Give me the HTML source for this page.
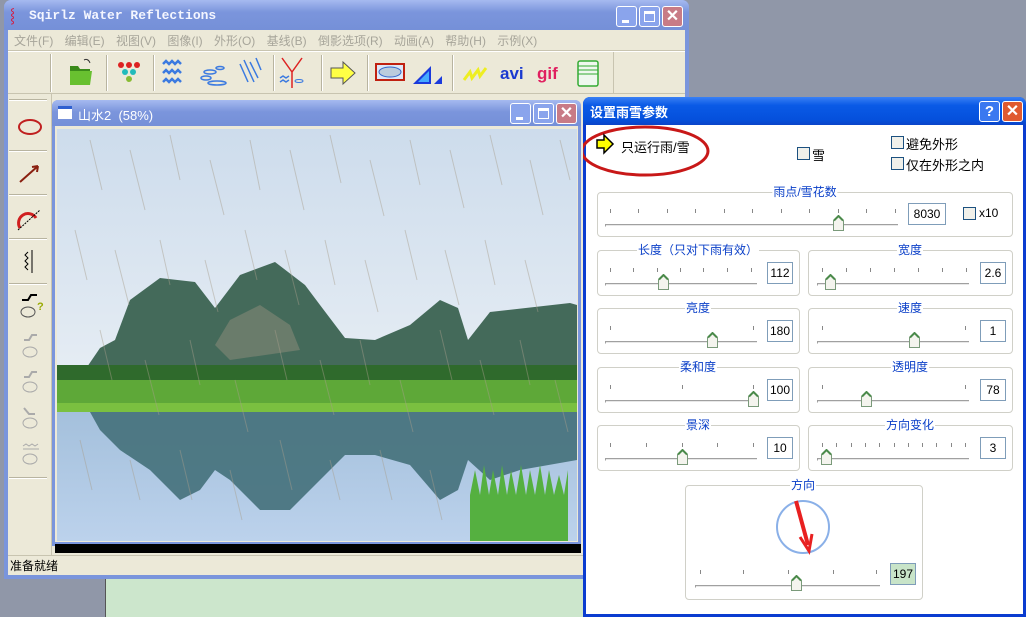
<!DOCTYPE html>
<html><head><meta charset="utf-8"><style>
*{margin:0;padding:0;box-sizing:border-box}
body{width:1026px;height:617px;overflow:hidden;background:#9097a8;position:relative;font-family:"Liberation Sans","Noto Sans CJK SC",sans-serif;font-size:12px}
.a{position:absolute}
.gb{position:absolute;border:1px solid #d0d0c8;border-radius:4px}
.gl{position:absolute;color:#0a3fc8;background:#fff;padding:0 1px;font-size:12px;line-height:14px;white-space:nowrap;transform:translateX(-50%)}
.tk{position:absolute;width:1px;height:4px;background:#888}
.tr{position:absolute;height:3px;border-top:1px solid #a0a0a0;border-bottom:1px solid #fff;background:#e8e8e8;border-left:1px solid #a0a0a0}
.th{position:absolute;width:11px;height:16px}
.bx{position:absolute;border:1px solid #7f9db9;background:#fff;text-align:center;font-size:12px;line-height:20px;height:22px}
.cb{position:absolute;width:13px;height:13px;border:1px solid #1c5180;background:#f0f0ea}
.tbsep{position:absolute;top:55px;width:2px;height:36px;border-left:1px solid #b8b4a0;border-right:1px solid #fff}
.lsep{position:absolute;left:12px;width:38px;height:2px;border-top:1px solid #b8b4a0;border-bottom:1px solid #fff}
.btn{position:absolute;width:21px;height:21px;border:1px solid #fff;border-radius:3px}
</style></head><body>
<div class="a" style="left:105px;top:578px;width:480px;height:39px;background:#cce6cc;border-left:1px solid #555"></div>

<div class="a" style="left:4px;top:0;width:685px;height:579px;background:#7a95dc;border-radius:7px 7px 0 0"></div>
<div class="a" style="left:4px;top:0;width:685px;height:30px;background:linear-gradient(#a6baf0,#7b95dc 40%,#7590d8);border-radius:7px 7px 0 0"></div>
<div class="a" style="left:10px;top:6px;font-size:14px;color:#d13">⸾</div>
<div class="a" style="left:29px;top:8px;color:#f4f6ff;font-family:'Liberation Mono',monospace;font-size:13px;font-weight:bold">Sqirlz Water Reflections</div>
<div class="btn" style="left:616px;top:6px;background:#8aa4ec"><div class="a" style="left:5px;top:13px;width:7px;height:3px;background:#fff"></div></div>
<div class="btn" style="left:639px;top:6px;background:#8aa4ec"><div class="a" style="left:4px;top:4px;width:11px;height:11px;border:1px solid #fff;border-top-width:3px"></div></div>
<div class="btn" style="left:662px;top:6px;background:#c87b86;color:#fff;font-weight:bold;font-size:16px;text-align:center;line-height:19px">✕</div>
<div class="a" style="left:8px;top:30px;width:677px;height:545px;background:#ece9d8"></div>
<div class="a" style="left:14px;top:32px;color:#a7a59a;font-size:12px;word-spacing:8px;white-space:nowrap">文件(F) 编辑(E) 视图(V) 图像(I) 外形(O) 基线(B) 倒影选项(R) 动画(A) 帮助(H) 示例(X)</div>
<div class="a" style="left:8px;top:50px;width:677px;height:1px;background:#c8c4b0"></div>
<div class="a" style="left:8px;top:51px;width:677px;height:1px;background:#fff"></div>
<div class="a" style="left:8px;top:93px;width:677px;height:1px;background:#c8c4b0"></div>
<div class="a" style="left:50px;top:54px;width:2px;height:38px;border-left:1px solid #b8b4a0;border-right:1px solid #fff"></div>
<div class="a" style="left:613px;top:52px;width:1px;height:41px;background:#c8c4b0"></div>
<div class="tbsep" style="left:106px"></div><div class="tbsep" style="left:153px"></div><div class="tbsep" style="left:273px"></div><div class="tbsep" style="left:321px"></div><div class="tbsep" style="left:367px"></div><div class="tbsep" style="left:452px"></div>
<svg class="a" style="left:60px;top:54px" width="560" height="38">
 <path d="M10 12h8l2 3h10v16H10z" fill="#3a8a1a"/><path d="M10 17h22l-2 14H10z" fill="#68c030"/><path d="M24 6q4-2 6 3" stroke="#333" fill="none"/>
 <g><circle cx="61" cy="11" r="3" fill="#d22"/><circle cx="69" cy="11" r="3" fill="#d22"/><circle cx="77" cy="11" r="3" fill="#d22"/><circle cx="65" cy="18" r="3" fill="#2bb"/><circle cx="73" cy="18" r="3" fill="#2bb"/><circle cx="69" cy="25" r="3" fill="#8b3"/></g>
 <g stroke="#3b7ae0" stroke-width="2.5" fill="none"><path d="M103 10l3-3 3 3 3-3 3 3 3-3 3 3"/><path d="M103 19l3-3 3 3 3-3 3 3 3-3 3 3"/><path d="M103 28l3-3 3 3 3-3 3 3 3-3 3 3"/></g>
 <g stroke="#3b7ae0" stroke-width="1.5" fill="none"><ellipse cx="150" cy="18" rx="6" ry="2"/><ellipse cx="146" cy="24" rx="5" ry="2"/><ellipse cx="157" cy="29" rx="9" ry="2"/><ellipse cx="160" cy="14" rx="4" ry="1.5"/></g>
 <g stroke="#3b7ae0" stroke-width="1.5"><path d="M180 10l8 18M184 6l10 22M190 8l8 16M196 4l5 12"/></g>
 <path d="M222 4l10 14 10-14M232 18v16" stroke="#d22" stroke-width="1.5" fill="none"/><path d="M220 24l3-2 3 2 3-2M220 28l3-2 3 2 3-2" stroke="#3b7ae0" fill="none" stroke-width="1.5"/><ellipse cx="239" cy="27" rx="4" ry="1.5" stroke="#3b7ae0" fill="none"/>
 <path d="M271 14h12v-6l12 11-12 11v-6h-12z" fill="#ff4" stroke="#555"/>
 <rect x="316" y="10" width="28" height="16" fill="#dde8f8" stroke="#c02010" stroke-width="2"/><ellipse cx="330" cy="18" rx="11" ry="5" fill="#bcd" stroke="#36c"/>
 <path d="M353 30l18-18v18z" fill="#1a3adc"/><path d="M358 28l11-11v11z" fill="#4af"/><path d="M374 30l8-8v8z" fill="#1a3adc"/>
 <path d="M404 26l6-8 2 6 6-8 2 6 6-8" stroke="#ee2" stroke-width="3" fill="none"/>
 <text x="440" y="25" font-family="Liberation Sans" font-weight="bold" font-size="17" fill="#1a3ad0">avi</text>
 <text x="477" y="25" font-family="Liberation Sans" font-weight="bold" font-size="17" fill="#e02060">gif</text>
 <rect x="518" y="7" width="20" height="25" rx="2" fill="#eef8ee" stroke="#3a3" stroke-width="1.5"/><path d="M518 12h20M518 16h20M518 20h20" stroke="#3a3"/>
</svg>
<div class="a" style="left:8px;top:94px;width:44px;height:461px;background:#ece9d8;border-right:1px solid #c8c4b0"></div>
<div class="lsep" style="top:99px;left:9px"></div><div class="lsep" style="top:150px;left:9px"></div><div class="lsep" style="top:194px;left:9px"></div><div class="lsep" style="top:238px;left:9px"></div><div class="lsep" style="top:283px;left:9px"></div><div class="lsep" style="top:477px;left:9px"></div>
<svg class="a" style="left:8px;top:100px" width="44" height="380">
 <ellipse cx="22" cy="27" rx="11" ry="7" stroke="#c02020" stroke-width="2" fill="none"/>
 <path d="M12 82l18-16M30 66l-6 1M30 66l-1 6" stroke="#8a2010" stroke-width="2" fill="none"/>
 <path d="M12 128A9 9 0 0 1 28 118" stroke="#d02020" stroke-width="3" fill="none"/><path d="M10 130l22-20" stroke="#000" stroke-dasharray="2 1"/>
 <path d="M24 150v23M20 152l-3 3 3 3-3 3 3 3-3 3 3 3" stroke="#000" fill="none"/>
 <path d="M14 200h6l3-5h6" stroke="#000" stroke-width="2" fill="none"/><ellipse cx="20" cy="212" rx="7" ry="5" stroke="#555" fill="none"/><text x="29" y="210" font-size="11" font-weight="bold" fill="#9a0">?</text>
 <g stroke="#aaa" fill="none"><path d="M16 240h5l3-5h5" stroke-width="2"/><ellipse cx="22" cy="252" rx="7" ry="5"/>
 <path d="M16 277h5l3-5h5" stroke-width="2"/><ellipse cx="22" cy="287" rx="7" ry="5"/>
 <path d="M16 308l5 6h6" stroke-width="2"/><ellipse cx="22" cy="323" rx="7" ry="5"/>
 <path d="M15 346l3-2 3 2 3-2 3 2 3-2M15 349h16"/><ellipse cx="22" cy="359" rx="7" ry="5"/></g>
</svg>
<div class="a" style="left:52px;top:100px;width:529px;height:446px;background:#7a95dc;border-radius:6px 6px 0 0"></div>
<div class="a" style="left:52px;top:100px;width:529px;height:26px;background:linear-gradient(#a6baf0,#7b95dc 45%,#7590d8);border-radius:6px 6px 0 0"></div>
<div class="a" style="left:58px;top:106px;width:14px;height:13px;background:#fff;border-top:3px solid #3060d0"></div>
<div class="a" style="left:78px;top:105px;color:#fff;font-size:13px">山水2&nbsp;&nbsp;(58%)</div>
<div class="btn" style="left:510px;top:103px;background:#8aa4ec"><div class="a" style="left:5px;top:13px;width:7px;height:3px;background:#fff"></div></div>
<div class="btn" style="left:533px;top:103px;background:#8aa4ec"><div class="a" style="left:4px;top:4px;width:11px;height:11px;border:1px solid #fff;border-top-width:3px"></div></div>
<div class="btn" style="left:556px;top:103px;background:#c87b86;color:#fff;font-weight:bold;font-size:16px;text-align:center;line-height:19px">✕</div>
<div class="a" style="left:55px;top:126px;width:523px;height:416px;background:#ece9d8"></div>
<svg class="a" style="left:57px;top:129px" width="520" height="412" viewBox="57 129 520 412">
 <defs><linearGradient id="sk" x1="0" y1="0" x2="0" y2="1"><stop offset="0" stop-color="#cddcec"/><stop offset="1" stop-color="#e6edf4"/></linearGradient>
 <linearGradient id="wt" x1="0" y1="0" x2="0" y2="1"><stop offset="0" stop-color="#a4c0dc"/><stop offset="1" stop-color="#bcd2ec"/></linearGradient></defs>
 <rect x="57" y="129" width="520" height="250" fill="url(#sk)"/>
 <path d="M85 370L100 348 115 340 130 300 160 278 195 282 215 308 240 275 275 262 305 285 320 305 345 338 375 340 410 325 440 300 458 308 468 340 490 312 570 303 577 305V378H85z" fill="#446a5a"/>
 <path d="M215 345L230 320 260 305 290 325 300 350 230 360z" fill="#8a8a7a" opacity=".55"/>
 <rect x="57" y="365" width="520" height="22" fill="#2f6a2c"/>
 <rect x="57" y="380" width="520" height="32" fill="#5ea838"/>
 <rect x="57" y="403" width="520" height="10" fill="#7ac040"/>
 <rect x="57" y="412" width="520" height="129" fill="url(#wt)"/>
 <path d="M90 412L100 430 120 450 150 470 180 500 200 490 215 470 230 480 260 510 290 510 320 480 345 455 375 455 410 465 440 500 458 490 468 460 490 480 520 470 577 460V412z" fill="#44707a" opacity=".9"/>
 <path d="M470 495l5-25 5 25 4-30 5 30 4-25 5 25 4-30 5 30 4-25 5 25 5-30 5 30 4-25 5 25 5-30 5 30 4-25 5 25 5-20 5 20 4-25V541H470z" fill="#55b040"/>
 <g stroke="#a89e8c" stroke-width="1" opacity=".45">
  <path d="M90 140l12 50M130 150l15 60M170 135l10 45M210 160l14 55M250 140l10 50M290 150l14 60M330 135l11 48M370 160l14 56M410 140l10 45M450 150l14 58M490 135l12 50M530 160l13 55M560 140l10 40"/>
  <path d="M75 230l12 50M115 250l14 55M160 240l10 45M205 260l13 52M245 230l12 50M285 250l14 55M325 240l10 45M365 260l13 52M405 230l12 50M445 250l14 55M485 240l10 45M525 260l13 52"/>
  <path d="M100 330l12 50M145 360l14 55M190 340l10 45M235 380l13 52M275 330l12 50M320 360l14 55M360 340l10 45M400 380l13 52M440 330l12 50M480 360l14 55M520 340l10 45M555 380l13 52"/>
  <path d="M80 440l12 50M130 460l10 40M180 450l12 50M230 470l12 50M280 440l12 50M330 460l10 40M380 450l12 50M430 470l12 50"/>
 </g>
</svg>
<div class="a" style="left:55px;top:544px;width:526px;height:9px;background:#000"></div>
<div class="a" style="left:8px;top:555px;width:677px;height:20px;background:#ece9d8;border-top:1px solid #c8c4b0"></div>
<div class="a" style="left:10px;top:557px;font-size:12px;color:#000">准备就绪</div>

<div class="a" style="left:583px;top:97px;width:443px;height:520px;background:#0a3cd0;border-radius:7px 7px 0 0"></div>
<div class="a" style="left:583px;top:97px;width:443px;height:28px;background:linear-gradient(#3a80f4,#0a5ae6 30%,#0550dc 80%,#0a44c8);border-radius:7px 7px 0 0"></div>
<div class="a" style="left:590px;top:102px;color:#fff;font-weight:bold;font-size:13px">设置雨雪参数</div>
<div class="btn" style="left:979px;top:101px;background:#3a78f0;color:#fff;font-weight:bold;font-size:15px;text-align:center;line-height:19px">?</div>
<div class="btn" style="left:1002px;top:101px;background:#e05a30;color:#fff;font-weight:bold;font-size:16px;text-align:center;line-height:19px">✕</div>
<div class="a" style="left:586px;top:125px;width:437px;height:489px;background:#fff"></div>

<svg class="a" style="left:583px;top:120px" width="140" height="65"><ellipse cx="62" cy="31" rx="63" ry="24" fill="none" stroke="#c81818" stroke-width="3"/><path d="M14 20h7v-5l9 9-9 9v-5h-7z" fill="#ff0" stroke="#000" stroke-width="1.5"/></svg>
<div class="a" style="left:621px;top:137px;font-size:13px">只运行雨/雪</div>
<div class="cb" style="left:797px;top:147px"></div><div class="a" style="left:812px;top:145px;font-size:13px">雪</div>
<div class="cb" style="left:891px;top:136px"></div><div class="a" style="left:906px;top:134px;font-size:13px">避免外形</div>
<div class="cb" style="left:891px;top:157px"></div><div class="a" style="left:906px;top:155px;font-size:13px">仅在外形之内</div>

<div class="gb" style="left:597px;top:192px;width:416px;height:45px"></div><div class="gl" style="left:805px;top:185px">雨点/雪花数</div>
<div class="tr" style="left:605px;top:224px;width:293px"></div>
<div class="tk" style="left:610px;top:209px"></div><div class="tk" style="left:638px;top:209px"></div><div class="tk" style="left:667px;top:209px"></div><div class="tk" style="left:695px;top:209px"></div><div class="tk" style="left:724px;top:209px"></div><div class="tk" style="left:752px;top:209px"></div><div class="tk" style="left:781px;top:209px"></div><div class="tk" style="left:809px;top:209px"></div><div class="tk" style="left:838px;top:209px"></div><div class="tk" style="left:866px;top:209px"></div><div class="tk" style="left:895px;top:209px"></div>
<svg class="th" style="left:833px;top:215px"><path d="M.5 15.5V5.5L5.5 .5l5 5v10z" fill="#f4f4ee" stroke="#7a9a7a"/><path d="M1 5.5L5.5 1 10 5.5" stroke="#4a8a4a" stroke-width="2" fill="none"/></svg>
<div class="bx" style="left:908px;top:203px;width:38px">8030</div>
<div class="cb" style="left:963px;top:207px"></div><div class="a" style="left:979px;top:206px;font-size:12px">x10</div>

<div class="gb" style="left:597px;top:250px;width:203px;height:46px"></div><div class="gl" style="left:698px;top:243px">长度（只对下雨有效）</div>
<div class="tr" style="left:605px;top:283px;width:152px"></div>
<div class="tk" style="left:610px;top:268px"></div><div class="tk" style="left:633px;top:268px"></div><div class="tk" style="left:657px;top:268px"></div><div class="tk" style="left:680px;top:268px"></div><div class="tk" style="left:703px;top:268px"></div><div class="tk" style="left:727px;top:268px"></div><div class="tk" style="left:751px;top:268px"></div>
<svg class="th" style="left:658px;top:274px"><path d="M.5 15.5V5.5L5.5 .5l5 5v10z" fill="#f4f4ee" stroke="#7a9a7a"/><path d="M1 5.5L5.5 1 10 5.5" stroke="#4a8a4a" stroke-width="2" fill="none"/></svg>
<div class="bx" style="left:767px;top:262px;width:26px">112</div>

<div class="gb" style="left:808px;top:250px;width:205px;height:46px"></div><div class="gl" style="left:910px;top:243px">宽度</div>
<div class="tr" style="left:817px;top:283px;width:152px"></div>
<div class="tk" style="left:822px;top:268px"></div><div class="tk" style="left:846px;top:268px"></div><div class="tk" style="left:870px;top:268px"></div><div class="tk" style="left:894px;top:268px"></div><div class="tk" style="left:918px;top:268px"></div><div class="tk" style="left:942px;top:268px"></div><div class="tk" style="left:966px;top:268px"></div>
<svg class="th" style="left:825px;top:274px"><path d="M.5 15.5V5.5L5.5 .5l5 5v10z" fill="#f4f4ee" stroke="#7a9a7a"/><path d="M1 5.5L5.5 1 10 5.5" stroke="#4a8a4a" stroke-width="2" fill="none"/></svg>
<div class="bx" style="left:980px;top:262px;width:26px">2.6</div>

<div class="gb" style="left:597px;top:308px;width:203px;height:46px"></div><div class="gl" style="left:698px;top:301px">亮度</div>
<div class="tr" style="left:605px;top:341px;width:152px"></div>
<div class="tk" style="left:610px;top:326px"></div><div class="tk" style="left:753px;top:326px"></div>
<svg class="th" style="left:707px;top:332px"><path d="M.5 15.5V5.5L5.5 .5l5 5v10z" fill="#f4f4ee" stroke="#7a9a7a"/><path d="M1 5.5L5.5 1 10 5.5" stroke="#4a8a4a" stroke-width="2" fill="none"/></svg>
<div class="bx" style="left:767px;top:320px;width:26px">180</div>
<div class="gb" style="left:808px;top:308px;width:205px;height:46px"></div><div class="gl" style="left:910px;top:301px">速度</div>
<div class="tr" style="left:817px;top:341px;width:152px"></div>
<div class="tk" style="left:822px;top:326px"></div><div class="tk" style="left:965px;top:326px"></div>
<svg class="th" style="left:909px;top:332px"><path d="M.5 15.5V5.5L5.5 .5l5 5v10z" fill="#f4f4ee" stroke="#7a9a7a"/><path d="M1 5.5L5.5 1 10 5.5" stroke="#4a8a4a" stroke-width="2" fill="none"/></svg>
<div class="bx" style="left:980px;top:320px;width:26px">1</div>

<div class="gb" style="left:597px;top:367px;width:203px;height:46px"></div><div class="gl" style="left:698px;top:360px">柔和度</div>
<div class="tr" style="left:605px;top:400px;width:152px"></div>
<div class="tk" style="left:610px;top:385px"></div><div class="tk" style="left:682px;top:385px"></div><div class="tk" style="left:753px;top:385px"></div>
<svg class="th" style="left:748px;top:391px"><path d="M.5 15.5V5.5L5.5 .5l5 5v10z" fill="#f4f4ee" stroke="#7a9a7a"/><path d="M1 5.5L5.5 1 10 5.5" stroke="#4a8a4a" stroke-width="2" fill="none"/></svg>
<div class="bx" style="left:767px;top:379px;width:26px">100</div>
<div class="gb" style="left:808px;top:367px;width:205px;height:46px"></div><div class="gl" style="left:910px;top:360px">透明度</div>
<div class="tr" style="left:817px;top:400px;width:152px"></div>
<div class="tk" style="left:822px;top:385px"></div><div class="tk" style="left:965px;top:385px"></div>
<svg class="th" style="left:861px;top:391px"><path d="M.5 15.5V5.5L5.5 .5l5 5v10z" fill="#f4f4ee" stroke="#7a9a7a"/><path d="M1 5.5L5.5 1 10 5.5" stroke="#4a8a4a" stroke-width="2" fill="none"/></svg>
<div class="bx" style="left:980px;top:379px;width:26px">78</div>

<div class="gb" style="left:597px;top:425px;width:203px;height:46px"></div><div class="gl" style="left:698px;top:418px">景深</div>
<div class="tr" style="left:605px;top:458px;width:152px"></div>
<div class="tk" style="left:610px;top:443px"></div><div class="tk" style="left:646px;top:443px"></div><div class="tk" style="left:682px;top:443px"></div><div class="tk" style="left:717px;top:443px"></div><div class="tk" style="left:753px;top:443px"></div>
<svg class="th" style="left:677px;top:449px"><path d="M.5 15.5V5.5L5.5 .5l5 5v10z" fill="#f4f4ee" stroke="#7a9a7a"/><path d="M1 5.5L5.5 1 10 5.5" stroke="#4a8a4a" stroke-width="2" fill="none"/></svg>
<div class="bx" style="left:767px;top:437px;width:26px">10</div>
<div class="gb" style="left:808px;top:425px;width:205px;height:46px"></div><div class="gl" style="left:910px;top:418px">方向变化</div>
<div class="tr" style="left:817px;top:458px;width:152px"></div>
<div class="tk" style="left:822px;top:443px"></div><div class="tk" style="left:836px;top:443px"></div><div class="tk" style="left:851px;top:443px"></div><div class="tk" style="left:865px;top:443px"></div><div class="tk" style="left:879px;top:443px"></div><div class="tk" style="left:894px;top:443px"></div><div class="tk" style="left:908px;top:443px"></div><div class="tk" style="left:922px;top:443px"></div><div class="tk" style="left:936px;top:443px"></div><div class="tk" style="left:951px;top:443px"></div><div class="tk" style="left:965px;top:443px"></div>
<svg class="th" style="left:821px;top:449px"><path d="M.5 15.5V5.5L5.5 .5l5 5v10z" fill="#f4f4ee" stroke="#7a9a7a"/><path d="M1 5.5L5.5 1 10 5.5" stroke="#4a8a4a" stroke-width="2" fill="none"/></svg>
<div class="bx" style="left:980px;top:437px;width:26px">3</div>

<div class="gb" style="left:685px;top:485px;width:238px;height:115px"></div><div class="gl" style="left:803px;top:478px">方向</div>
<svg class="a" style="left:770px;top:495px" width="70" height="65"><circle cx="33" cy="32" r="26" fill="none" stroke="#8ab0e8" stroke-width="2"/><path d="M26 6l12 44" stroke="#e82020" stroke-width="4"/><path d="M30 42l9 14 3-17" stroke="#e82020" stroke-width="3" fill="none"/></svg>
<div class="tr" style="left:695px;top:585px;width:185px"></div>
<div class="tk" style="left:700px;top:570px"></div><div class="tk" style="left:743px;top:570px"></div><div class="tk" style="left:788px;top:570px"></div><div class="tk" style="left:833px;top:570px"></div><div class="tk" style="left:876px;top:570px"></div>
<svg class="th" style="left:791px;top:575px"><path d="M.5 15.5V5.5L5.5 .5l5 5v10z" fill="#f4f4ee" stroke="#7a9a7a"/><path d="M1 5.5L5.5 1 10 5.5" stroke="#4a8a4a" stroke-width="2" fill="none"/></svg>
<div class="bx" style="left:890px;top:563px;width:26px;background:#c8e4c8">197</div>
</body></html>
